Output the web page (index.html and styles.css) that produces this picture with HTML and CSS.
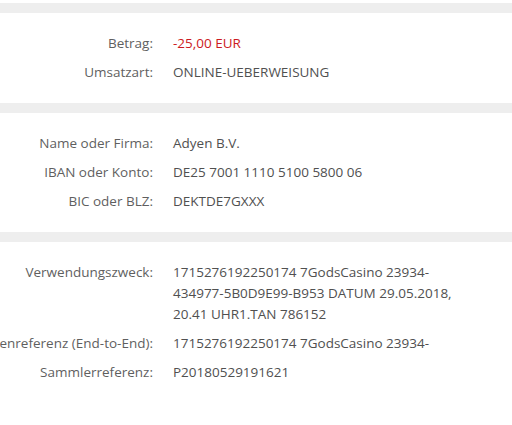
FILE: index.html
```html
<!DOCTYPE html>
<html lang="de">
<head>
<meta charset="utf-8">
<link rel="stylesheet" href="styles.css">
</head>
<body>
<div class="page">
  <div class="band"></div>
  <section class="block">
    <div class="row"><div class="label"><span>Betrag:</span></div><div class="value amount">-25,00&nbsp;EUR</div></div>
    <div class="row"><div class="label"><span>Umsatzart:</span></div><div class="value">ONLINE-UEBERWEISUNG</div></div>
  </section>
  <div class="band"></div>
  <section class="block">
    <div class="row"><div class="label"><span>Name oder Firma:</span></div><div class="value">Adyen B.V.</div></div>
    <div class="row"><div class="label"><span>IBAN oder Konto:</span></div><div class="value">DE25 7001 1110 5100 5800 06</div></div>
    <div class="row"><div class="label"><span>BIC oder BLZ:</span></div><div class="value">DEKTDE7GXXX</div></div>
  </section>
  <div class="band"></div>
  <section class="block">
    <div class="row"><div class="label"><span>Verwendungszweck:</span></div><div class="value">1715276192250174 7GodsCasino 23934-<br>434977-5B0D9E99-B953 DATUM 29.05.2018,<br>20.41 UHR1.TAN 786152</div></div>
    <div class="row"><div class="label"><span>Kundenreferenz (End-to-End):</span></div><div class="value">1715276192250174 7GodsCasino 23934-</div></div>
    <div class="row"><div class="label"><span>Sammlerreferenz:</span></div><div class="value">P20180529191621</div></div>
  </section>
</div>
</body>
</html>
```
FILE: styles.css
```css
html, body {
  margin: 0;
  padding: 0;
  background: #ffffff;
}
.page {
  padding-top: 3px;
  font-family: "Open Sans", "Noto Sans", sans-serif;
  font-size: 13.5px;
  line-height: 21px;
  color: #505050;
  overflow: hidden;
}
.band {
  height: 10px;
  background: #eeeeee;
}
.block {
  padding: 16px 0;
}
.row {
  display: grid;
  grid-template-columns: 153px 1fr;
  column-gap: 20px;
  padding: 4px 0;
}
.label {
  display: flex;
  justify-content: flex-end;
  white-space: nowrap;
  color: #5f5f5f;
}
.value {
  color: #505050;
}
.amount {
  color: #cc1a22;
}
```
